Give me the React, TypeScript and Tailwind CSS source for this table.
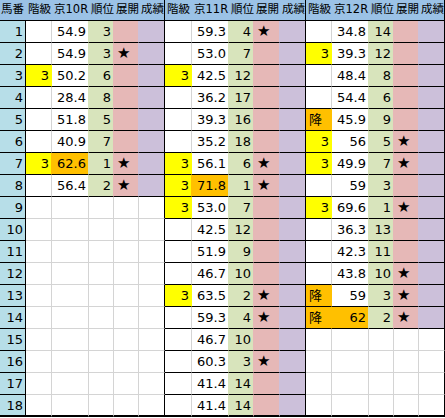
type Fill = "w" | "y" | "o" | "g" | "p" | "l";

type Row = {
  k?: string;
  kFill?: Fill;
  v?: string;
  vFill?: Fill;
  r?: string;
  star?: boolean;
};

type Section = {
  title: string;
  widths: string[];
  count: number;
  rows: Row[];
};

const bgClass: Record<Fill, string> = {
  w: "bg-white",
  y: "bg-[#ffff00]",
  o: "bg-[#ffc000]",
  g: "bg-[#d8e4bc]",
  p: "bg-[#e6b8b7]",
  l: "bg-[#ccc0da]",
};

const borderRClass: Record<Fill, string> = {
  w: "border-r-[#d4d4d4]",
  y: "border-r-[#ffff00]",
  o: "border-r-[#ffc000]",
  g: "border-r-[#d8e4bc]",
  p: "border-r-[#e6b8b7]",
  l: "border-r-[#ccc0da]",
};

const sections: Section[] = [
  {
    title: "京10R",
    widths: ["w-[26px]", "w-[37px]", "w-[25px]", "w-[25px]", "w-[26px]"],
    count: 8,
    rows: [
      { v: "54.9", r: "3" },
      { v: "54.9", r: "3", star: true },
      { k: "3", kFill: "y", v: "50.2", r: "6" },
      { v: "28.4", r: "8" },
      { v: "51.8", r: "5" },
      { v: "40.9", r: "7" },
      { k: "3", kFill: "y", v: "62.6", vFill: "o", r: "1", star: true },
      { v: "56.4", r: "2", star: true },
    ],
  },
  {
    title: "京11R",
    widths: ["w-[27px]", "w-[37px]", "w-[25px]", "w-[26px]", "w-[26px]"],
    count: 18,
    rows: [
      { v: "59.3", r: "4", star: true },
      { v: "53.0", r: "7" },
      { k: "3", kFill: "y", v: "42.5", r: "12" },
      { v: "36.2", r: "17" },
      { v: "39.3", r: "16" },
      { v: "35.2", r: "18" },
      { k: "3", kFill: "y", v: "56.1", r: "6", star: true },
      { k: "3", kFill: "y", v: "71.8", vFill: "o", r: "1", star: true },
      { k: "3", kFill: "y", v: "53.0", r: "7" },
      { v: "42.5", r: "12" },
      { v: "51.9", r: "9" },
      { v: "46.7", r: "10" },
      { k: "3", kFill: "y", v: "63.5", r: "2", star: true },
      { v: "59.3", r: "4", star: true },
      { v: "46.7", r: "10" },
      { v: "60.3", r: "3", star: true },
      { v: "41.4", r: "14" },
      { v: "41.4", r: "14" },
    ],
  },
  {
    title: "京12R",
    widths: ["w-[26px]", "w-[37px]", "w-[25px]", "w-[25px]", "w-[26px]"],
    count: 14,
    rows: [
      { v: "34.8", r: "14" },
      { k: "3", kFill: "y", v: "39.3", r: "12" },
      { v: "48.4", r: "8" },
      { v: "54.4", r: "6" },
      { k: "降", kFill: "o", v: "45.9", r: "9" },
      { k: "3", kFill: "y", v: "56", r: "5", star: true },
      { k: "3", kFill: "y", v: "49.9", r: "7", star: true },
      { v: "59", r: "3" },
      { k: "3", kFill: "y", v: "69.6", r: "1", star: true },
      { v: "36.3", r: "13" },
      { v: "42.3", r: "11" },
      { v: "43.8", r: "10", star: true },
      { k: "降", kFill: "o", v: "59", r: "3", star: true },
      { k: "降", kFill: "o", v: "62", vFill: "o", r: "2", star: true },
    ],
  },
];

const heads = ["階級", "", "順位", "展開", "成績"];

function SectionRow({ sec, i }: { sec: Section; i: number }) {
  const filled = i < sec.count;
  const row: Row = sec.rows[i] ?? {};
  const fills: Fill[] = filled
    ? [row.kFill ?? "w", row.vFill ?? "w", "g", "p", "l"]
    : ["w", "w", "w", "w", "w"];
  const texts = [row.k ?? "", row.v ?? "", row.r ?? "", row.star ? "★" : "", ""];
  const last = i === 17;

  return (
    <>
      {fills.map((f, c) => {
        let rc = "border-r-black";
        if (c < 4) {
          const n = fills[c + 1];
          rc = n !== "w" ? borderRClass[n] : borderRClass[f];
        }
        const bc = last
          ? "border-b-2 border-b-black"
          : filled
          ? "border-b border-b-black"
          : "border-b border-b-[#d4d4d4]";
        const leftText = c === 3 || texts[c] === "降";
        return (
          <div
            key={c}
            className={`${sec.widths[c]} ${bgClass[f]} ${rc} ${bc} border-r flex items-center ${
              leftText ? "justify-start pl-[3px]" : "justify-end pr-[2px]"
            } ${c === 3 ? "pl-[3px] text-[15px]" : ""}`}
          >
            {texts[c]}
          </div>
        );
      })}
    </>
  );
}

export default function App() {
  const rows = Array.from({ length: 18 }, (_, i) => i);

  return (
    <div className="w-[445px] h-[418px] bg-white overflow-hidden font-['DejaVu_Sans','Noto_Sans_CJK_JP',sans-serif] text-[13px] text-black leading-none">
      <div className="flex h-[21px] bg-[#9bc2e6] border-b border-b-black text-[11.5px]">
        <div className="w-[26px] pl-[1px] flex items-center whitespace-nowrap">馬番</div>
        {sections.map((sec) => (
          <div key={sec.title} className="flex">
            {heads.map((h, c) => (
              <div
                key={c}
                className={`${sec.widths[c]} flex items-center pl-[2px] whitespace-nowrap overflow-hidden ${
                  c === 4 ? "border-r border-r-black" : ""
                }`}
              >
                {c === 1 ? sec.title : h}
              </div>
            ))}
          </div>
        ))}
      </div>

      {rows.map((i) => (
        <div key={i} className="flex h-[22px]">
          <div
            className={`w-[26px] bg-[#b7dee8] border-r border-r-black flex items-center justify-end pr-[2px] ${
              i === 17 ? "border-b-2 border-b-black" : "border-b border-b-black"
            }`}
          >
            {i + 1}
          </div>
          {sections.map((sec) => (
            <div key={sec.title} className="flex">
              <SectionRow sec={sec} i={i} />
            </div>
          ))}
        </div>
      ))}
    </div>
  );
}
